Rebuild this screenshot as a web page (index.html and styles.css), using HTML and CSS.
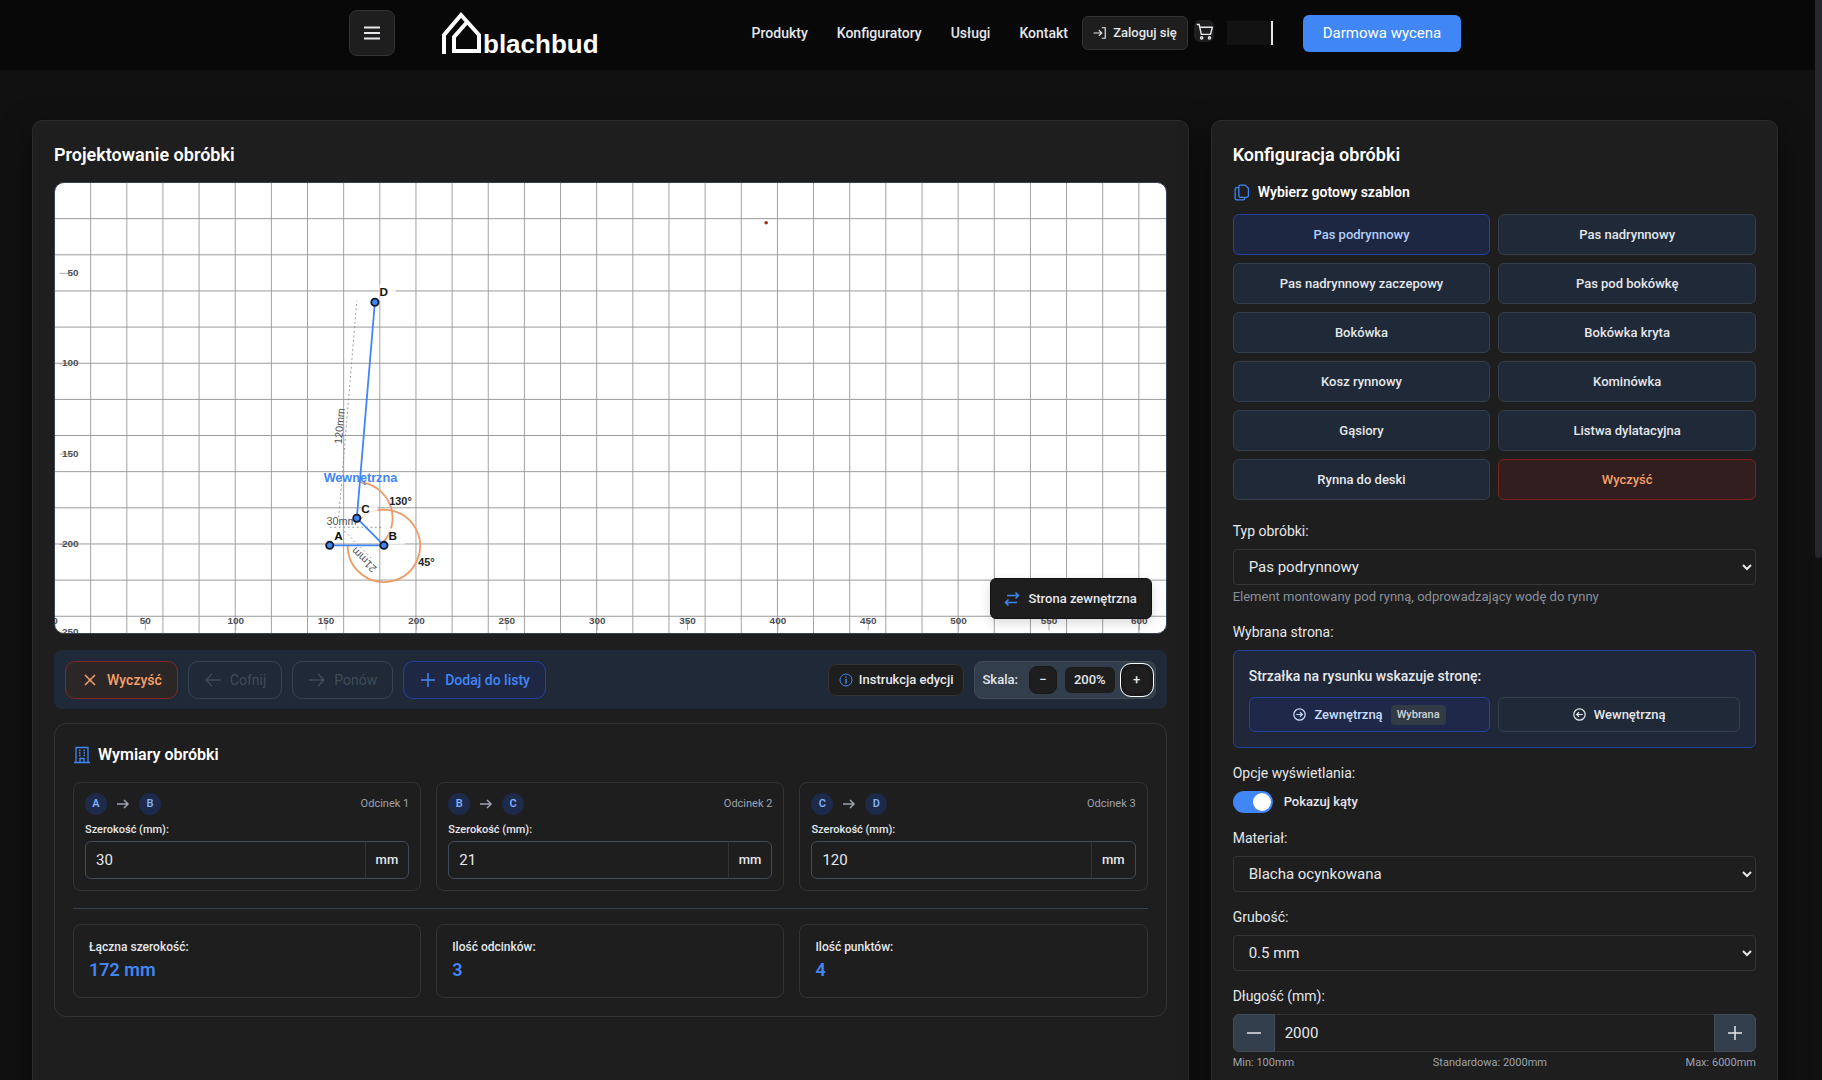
FILE: index.html
```html
<!DOCTYPE html>
<html lang="pl">
<head>
    <meta charset="UTF-8">
    <meta name="viewport" content="width=device-width, initial-scale=1.0">
    <title>Blachbud - Konfigurator obróbek</title>
    <link rel="stylesheet" href="styles.css">
</head>
<body>
    <header class="topbar">
        <div class="topbar-inner">
            <button class="menu-btn" aria-label="Menu">
                <svg width="18" height="18" viewBox="0 0 18 18" stroke="currentColor" stroke-width="2"><path d="M1 3.500h16M1 9h16M1 14.500h16"/></svg>
            </button>
            <a href="#" class="logo" aria-label="blachbud">
                <svg width="160" height="54" viewBox="0 -3 160 54">
                    <g fill="none" stroke="#fff" stroke-width="4">
                        <path d="M4 45V26L21 6l18 20v16H14V28L28 12"/>
                    </g>
                    <text x="43" y="44">blachbud</text>
                </svg>
            </a>
            <nav class="nav">
                <a href="#">Produkty</a>
                <a href="#">Konfiguratory</a>
                <a href="#">Usługi</a>
                <a href="#">Kontakt</a>
            </nav>
            <button class="login-btn">
                <svg width="14" height="14" viewBox="0 0 24 24" fill="none" stroke="currentColor" stroke-width="2"><path d="M15 3h6v18h-6M10 7l5 5-5 5M1 12h14"/></svg>
                Zaloguj się
            </button>
            <button class="cart-btn" aria-label="Koszyk">
                <svg width="17" height="17" viewBox="0 0 24 24" fill="none" stroke="currentColor" stroke-width="2"><circle cx="8" cy="21" r="1.500"/><circle cx="19" cy="21" r="1.500"/><path d="M1 2h3.500l3 14h13l2.500-10H5"/></svg>
            </button>
            <div class="search-slot"></div>
            <a href="#" class="cta">Darmowa wycena</a>
        </div>
    </header>

    <main class="layout">
        <section class="panel designer">
            <h2>Projektowanie obróbki</h2>
            <div class="canvas-wrap">
                <svg class="canvas" viewBox="0 0 1230 498" preserveAspectRatio="xMinYMin slice">
                    <defs>
                        <pattern id="grid" width="40" height="40" patternUnits="userSpaceOnUse">
                            <path d="M40 0V40H0" fill="none" stroke="#999" stroke-width="2"/>
                        </pattern>
                    </defs>
                    <rect width="1230" height="500" fill="url(#grid)"/>
                    <g id="axis" class="axis"></g>

                    <g class="dims">
                        <path d="M304 381H364M350 415L320 385M314 370L334 130"/>
                        <text x="317" y="378">30mm</text>
                        <text transform="translate(342 417) rotate(225)" y="4">21mm</text>
                        <text transform="translate(315 269) rotate(-85)" y="4">120mm</text>
                    </g>
                    <g class="arcs">
                        <path d="M324 401A40 40 0 1 0 336 373"/>
                        <path d="M337 331A40 40 0 0 1 362 399"/>
                    </g>
                    <g class="label-bg">
                        <rect x="339" y="352" width="18" height="18"/>
                        <rect x="369" y="382" width="18" height="18"/>
                        <rect x="359" y="112" width="18" height="18"/>
                    </g>
                    <path class="profile" d="M304 401H364L334 371L354 132"/>
                    <g class="points">
                        <circle cx="304" cy="401" r="4"/>
                        <circle cx="364" cy="401" r="4"/>
                        <circle cx="334" cy="371" r="4"/>
                        <circle cx="354" cy="132" r="4"/>
                    </g>
                    <g class="point-labels">
                        <text x="309" y="395">A</text>
                        <text x="369" y="395">B</text>
                        <text x="339" y="365">C</text>
                        <text x="359" y="125">D</text>
                    </g>
                    <g class="angle-labels">
                        <text x="370" y="356">130°</text>
                        <text x="402" y="424">45°</text>
                    </g>
                    <text class="side-label" x="338" y="331">Wewnętrzna</text>
                    <circle cx="787" cy="44" r="2" fill="#9a3412"/>
                </svg>
                <button class="side-badge">
                    <svg width="16" height="16" viewBox="0 0 16 16" fill="none" stroke="#4086f4" stroke-width="1.500"><path d="M3 4.500h12M11.500 1.500l3 3-3 3M13 11.500H1M4.500 8.500l-3 3 3 3"/></svg>
                    Strona zewnętrzna
                </button>
            </div>

            <div class="toolbar">
                <button class="tool tool-danger">
                    <svg width="18" height="18" viewBox="0 0 18 18"><path d="M4 4l10 10M14 4L4 14"/></svg>
                    Wyczyść
                </button>
                <button class="tool" disabled>
                    <svg width="18" height="18" viewBox="0 0 18 18"><path d="M17 9H2M8 3L2 9l6 6"/></svg>
                    Cofnij
                </button>
                <button class="tool" disabled>
                    <svg width="18" height="18" viewBox="0 0 18 18"><path d="M1 9h15M10 3l6 6-6 6"/></svg>
                    Ponów
                </button>
                <button class="tool tool-primary">
                    <svg width="18" height="18" viewBox="0 0 18 18"><path d="M9 2v14M2 9h14"/></svg>
                    Dodaj do listy
                </button>
                <button class="help-btn">
                    <svg width="14" height="14" viewBox="0 0 14 14" fill="none" stroke="#4086f4"><circle cx="7" cy="7" r="6"/><path d="M7 6v4.500M7 3.500v1.300" stroke-width="1.500"/></svg>
                    Instrukcja edycji
                </button>
                <div class="scale">
                    <span class="scale-label">Skala:</span>
                    <button class="scale-btn" aria-label="Pomniejsz">−</button>
                    <span class="scale-value">200%</span>
                    <button class="scale-btn focused" aria-label="Powiększ">+</button>
                </div>
            </div>

            <div class="dimensions">
                <h3>
                    <svg width="18" height="18" viewBox="0 0 18 18" fill="none" stroke="#4086f4" stroke-width="1.300"><path d="M3 16.500V1.500h12v15M1 16.500h16M7 16.500v-4h4v4"/><path d="M6 4.500h1.500M10.500 4.500H12M6 7h1.500M10.500 7H12M6 9.500h1.500M10.500 9.500H12" stroke-width="1.500"/></svg>
                    Wymiary obróbki
                </h3>
                <div class="cards">
                    <div class="segment">
                        <div class="segment-head">
                            <span class="dot">A</span>
                            <svg width="14" height="14" viewBox="0 0 14 14"><path d="M1 7h11M8 3l4 4-4 4"/></svg>
                            <span class="dot">B</span>
                            <span class="segment-no">Odcinek 1</span>
                        </div>
                        <label for="seg1">Szerokość (mm):</label>
                        <div class="input-group"><input id="seg1" type="text" value="30"><span>mm</span></div>
                    </div>
                    <div class="segment">
                        <div class="segment-head">
                            <span class="dot">B</span>
                            <svg width="14" height="14" viewBox="0 0 14 14"><path d="M1 7h11M8 3l4 4-4 4"/></svg>
                            <span class="dot">C</span>
                            <span class="segment-no">Odcinek 2</span>
                        </div>
                        <label for="seg2">Szerokość (mm):</label>
                        <div class="input-group"><input id="seg2" type="text" value="21"><span>mm</span></div>
                    </div>
                    <div class="segment">
                        <div class="segment-head">
                            <span class="dot">C</span>
                            <svg width="14" height="14" viewBox="0 0 14 14"><path d="M1 7h11M8 3l4 4-4 4"/></svg>
                            <span class="dot">D</span>
                            <span class="segment-no">Odcinek 3</span>
                        </div>
                        <label for="seg3">Szerokość (mm):</label>
                        <div class="input-group"><input id="seg3" type="text" value="120"><span>mm</span></div>
                    </div>
                </div>
                <hr>
                <div class="cards">
                    <div class="summary"><span>Łączna szerokość:</span><strong>172 mm</strong></div>
                    <div class="summary"><span>Ilość odcinków:</span><strong>3</strong></div>
                    <div class="summary"><span>Ilość punktów:</span><strong>4</strong></div>
                </div>
            </div>
        </section>

        <aside class="panel config">
            <h2>Konfiguracja obróbki</h2>
            <h4>
                <svg width="17" height="17" viewBox="0 0 16 16" fill="none" stroke="#4086f4" stroke-width="1.200"><path d="M5.500 2.500a1.500 1.500 0 0 1 1.500-1.500h4.500l3 3v7a1.500 1.500 0 0 1-1.500 1.500H7a1.500 1.500 0 0 1-1.500-1.500zM5.500 3.500H3.500a1.500 1.500 0 0 0-1.500 1.500V13.500a1.500 1.500 0 0 0 1.500 1.500h6a1.500 1.500 0 0 0 1.500-1.500v-1"/></svg>
                Wybierz gotowy szablon
            </h4>
            <div class="templates">
                <button class="active">Pas podrynnowy</button>
                <button>Pas nadrynnowy</button>
                <button>Pas nadrynnowy zaczepowy</button>
                <button>Pas pod bokówkę</button>
                <button>Bokówka</button>
                <button>Bokówka kryta</button>
                <button>Kosz rynnowy</button>
                <button>Kominówka</button>
                <button>Gąsiory</button>
                <button>Listwa dylatacyjna</button>
                <button>Rynna do deski</button>
                <button class="clear">Wyczyść</button>
            </div>

            <div class="field">
                <label for="type">Typ obróbki:</label>
                <select id="type"><option>Pas podrynnowy</option></select>
                <p class="hint">Element montowany pod rynną, odprowadzający wodę do rynny</p>
            </div>

            <div class="field">
                <div class="field-title">Wybrana strona:</div>
                <div class="side-box">
                    <p>Strzałka na rysunku wskazuje stronę:</p>
                    <div class="side-buttons">
                        <button class="active">
                            <svg width="13" height="13" viewBox="0 0 16 16"><circle cx="8" cy="8" r="7"/><path d="M4 8h7M8.500 5l3 3-3 3"/></svg>
                            Zewnętrzną <span class="tag">Wybrana</span>
                        </button>
                        <button>
                            <svg width="13" height="13" viewBox="0 0 16 16"><circle cx="8" cy="8" r="7"/><path d="M12 8H5M7.500 5l-3 3 3 3"/></svg>
                            Wewnętrzną
                        </button>
                    </div>
                </div>
            </div>

            <div class="field">
                <div class="field-title">Opcje wyświetlania:</div>
                <label class="switch"><input type="checkbox" checked> Pokazuj kąty</label>
            </div>

            <div class="field">
                <label for="material">Materiał:</label>
                <select id="material"><option>Blacha ocynkowana</option></select>
            </div>

            <div class="field">
                <label for="thickness">Grubość:</label>
                <select id="thickness"><option>0.5 mm</option></select>
            </div>

            <div class="field">
                <label for="length">Długość (mm):</label>
                <div class="stepper">
                    <button aria-label="Mniej"><svg width="16" height="16" viewBox="0 0 16 16"><path d="M1 8h14"/></svg></button>
                    <input id="length" type="text" value="2000">
                    <button aria-label="Więcej"><svg width="16" height="16" viewBox="0 0 16 16"><path d="M1 8h14M8 1v14"/></svg></button>
                </div>
                <div class="range-info"><span>Min: 100mm</span><span>Standardowa: 2000mm</span><span>Max: 6000mm</span></div>
            </div>
        </aside>
    </main>
    <div class="scroll-thumb"></div>

    <script>
        // Axis labels every 50 mm (1 mm = 2 units)
        const axis = document.getElementById('axis');
        let marks = '';
        for (let mm = 0; mm <= 600; mm += 50) {
            const x = mm * 2;
            marks += `<path d="M${x} 484v11"/><text x="${x}" y="488" text-anchor="middle">${mm}</text>`;
        }
        for (let mm = 50; mm <= 250; mm += 50) {
            const y = mm * 2;
            // the last label sits on the bottom edge, keep it readable
            const baseline = Math.min(y + 3, 500);
            marks += `<path d="M5 ${y}h11"/><text x="26" y="${baseline}" text-anchor="end">${mm}</text>`;
        }
        axis.innerHTML = marks;
    </script>
</body>
</html>
```

FILE: styles.css
```css
* {
    box-sizing: border-box;
}
body {
    margin: 0;
    height: 100vh;
    overflow: hidden;
    background: #111;
    color: #e5e7eb;
    font-family: Roboto, "Liberation Sans", sans-serif;
    font-size: 15px;
    line-height: 20px;
}
button, input, select {
    font: inherit;
    color: inherit;
}
button {
    cursor: pointer;
    padding: 0;
}
a {
    color: inherit;
    text-decoration: none;
}
h2, h3, h4, p {
    margin: 0;
}
svg {
    flex: none;
}

/* Header */
.topbar {
    background: #080808;
    padding: 0 28px 0 16px;
}
.topbar-inner {
    display: flex;
    align-items: center;
    height: 70px;
    padding-bottom: 4px;
    max-width: 1112px;
    margin: 0 auto;
}
.menu-btn {
    display: flex;
    align-items: center;
    justify-content: center;
    width: 46px;
    height: 46px;
    background: #1e1e1e;
    border: 1px solid #333;
    border-radius: 8px;
}
.logo {
    display: flex;
    margin-left: 45px;
}
.logo text {
    font: bold 26px "Liberation Sans", sans-serif;
    fill: #fff;
}
.nav {
    display: flex;
    gap: 29px;
    margin: 0 14px 0 auto;
    font-size: 14px;
    font-weight: 500;
}
.login-btn {
    display: flex;
    align-items: center;
    justify-content: center;
    gap: 6px;
    width: 106px;
    height: 34px;
    background: #1e1e1e;
    border: 1px solid #333;
    border-radius: 6px;
    font-size: 13px;
    font-weight: 500;
}
.cart-btn {
    display: flex;
    align-items: center;
    justify-content: center;
    width: 20px;
    height: 22px;
    margin: 0 13px 4px 6px;
    background: #1e1e1e;
    border: none;
    border-radius: 6px;
}
.search-slot {
    width: 46px;
    height: 24px;
    margin-right: 30px;
    background: #121212;
    border-right: 2px solid #e5e7eb;
}
.cta {
    display: flex;
    align-items: center;
    justify-content: center;
    width: 158px;
    height: 37px;
    background: #4086f4;
    border-radius: 6px;
    color: #fff;
}

/* Layout */
.layout {
    display: grid;
    grid-template-columns: repeat(12, 1fr);
    gap: 22px;
    padding: 50px 44px 0 32px;
}
.panel {
    min-height: 100vh;
    padding: 22px 21px;
    background: #1e1e1e;
    border: 1px solid #2b2b2d;
    border-radius: 10px;
    box-shadow: 0 10px 30px rgba(0, 0, 0, 0.5);
}
.designer {
    grid-column: span 8;
}
.config {
    grid-column: span 4;
}
.panel h2 {
    margin-bottom: 15px;
    color: #fff;
    font-size: 18px;
    font-weight: 600;
    line-height: 24px;
}

/* Drawing area */
.canvas-wrap {
    position: relative;
    height: 452px;
    border: 1px solid #374151;
    border-radius: 10px;
    background: #fff;
    overflow: hidden;
}
.canvas {
    display: block;
    width: 100%;
    height: 100%;
    font-family: "Liberation Sans", Arial, sans-serif;
}
.axis text {
    font-size: 11px;
    font-weight: bold;
    fill: #4b4f55;
}
.axis path {
    stroke: #9ca3af;
}
.dims path {
    fill: none;
    stroke: #8a8a8a;
    stroke-dasharray: 2 3;
}
.dims text {
    font-size: 12px;
    text-anchor: middle;
    fill: #555;
}
.arcs path {
    fill: none;
    stroke: #ee9a64;
    stroke-width: 2;
}
.label-bg rect {
    fill: #fff;
    opacity: 0.8;
}
.profile {
    fill: none;
    stroke: #4086f4;
    stroke-width: 2;
}
.points circle {
    fill: #4086f4;
    stroke: #111827;
    stroke-width: 2;
}
.point-labels text {
    font-size: 13px;
    font-weight: bold;
    fill: #111;
}
.angle-labels text {
    font-size: 12px;
    font-weight: bold;
    fill: #222;
}
.side-label {
    font-size: 14px;
    font-weight: bold;
    text-anchor: middle;
    fill: #4086f4;
}
.side-badge {
    position: absolute;
    right: 14px;
    bottom: 14px;
    display: flex;
    align-items: center;
    justify-content: center;
    gap: 8px;
    width: 162px;
    height: 41px;
    background: #1e1e1e;
    border: 1px solid #111;
    border-radius: 6px;
    box-shadow: 0 4px 12px rgba(0, 0, 0, 0.15);
    font-size: 13px;
    font-weight: 500;
}

/* Toolbar */
.toolbar {
    display: flex;
    align-items: center;
    gap: 10px;
    margin: 16px 0 14px;
    padding: 10px 11px;
    min-height: 59px;
    background: #1f2937;
    border-radius: 8px;
}
.tool {
    display: flex;
    align-items: center;
    gap: 8px;
    height: 38px;
    padding: 0 15px;
    background: none;
    border: 1px solid #374151;
    border-radius: 10px;
    font-size: 14px;
    font-weight: 500;
}
.tool svg, .segment-head svg, .stepper svg, .side-buttons svg {
    fill: none;
    stroke: currentColor;
    stroke-width: 1.5;
}
.tool:disabled {
    color: #414c57;
    font-weight: 400;
}
.tool-danger {
    color: #f4a06a;
    background: #2c2626;
    border-color: #7f2626;
}
.tool-primary {
    color: #4086f4;
    background: #1e2845;
    border-color: #24429a;
}
.help-btn {
    display: flex;
    align-items: center;
    gap: 6px;
    height: 32px;
    margin-left: auto;
    padding: 0 10px;
    background: #1e1e1e;
    border: 1px solid #333;
    border-radius: 8px;
    font-size: 13px;
    font-weight: 500;
}
.scale {
    display: flex;
    align-items: center;
    gap: 8px;
    height: 38px;
    padding: 0 4px 0 7px;
    background: #323e4b;
    border: 1px solid #414b56;
    border-radius: 8px;
    font-size: 13px;
    font-weight: 500;
}
.scale-label {
    margin-right: 3px;
}
.scale-btn {
    width: 28px;
    height: 28px;
    background: #1e1e1e;
    border: 1px solid #1a1a1a;
    border-radius: 8px;
}
.scale-btn.focused {
    outline: 1px solid #fff;
    outline-offset: 2px;
    box-shadow: 0 0 0 2px #1a1a1a;
}
.scale-value {
    padding: 3px 9px;
    background: #1e1e1e;
    border-radius: 6px;
}

/* Dimensions */
.dimensions {
    padding: 18px;
    border: 1px solid #333336;
    border-radius: 12px;
}
.dimensions h3 {
    display: flex;
    align-items: center;
    gap: 7px;
    margin: 1px 0 15px;
    color: #fff;
    font-size: 16px;
    font-weight: 600;
    line-height: 24px;
}
.cards {
    display: grid;
    grid-template-columns: repeat(3, 1fr);
    gap: 15px;
}
.segment {
    padding: 10px 11px 11px;
    border: 1px solid #333336;
    border-radius: 8px;
}
.segment-head {
    display: flex;
    align-items: center;
    gap: 9px;
    color: #9ca3af;
    font-size: 11px;
}
.dot {
    display: flex;
    align-items: center;
    justify-content: center;
    width: 22px;
    height: 22px;
    border-radius: 50%;
    background: #1d2a4a;
    color: #7fb0fa;
    font-size: 11px;
    font-weight: 600;
}
.segment-no {
    margin-left: auto;
}
.segment label {
    display: block;
    margin: 6px 0 2px;
    font-size: 11px;
    font-weight: 500;
    line-height: 18px;
}
.input-group {
    display: flex;
    height: 38px;
    border: 1px solid #414b5a;
    border-radius: 6px;
}
.input-group input {
    flex: 1;
    min-width: 0;
    padding: 0 10px;
    background: none;
    border: none;
}
.input-group span {
    display: flex;
    align-items: center;
    padding: 0 10px;
    border-left: 1px solid #333;
    font-size: 13px;
    font-weight: 500;
}
.dimensions hr {
    margin: 17px 0 15px;
    border: none;
    border-top: 1px solid #374151;
}
.summary {
    display: flex;
    flex-direction: column;
    padding: 12px 15px 14px;
    border: 1px solid #333336;
    border-radius: 8px;
    font-size: 12px;
    font-weight: 500;
}
.summary strong {
    color: #4086f4;
    font-size: 18px;
    font-weight: 600;
    line-height: 26px;
}

/* Configuration */
.config h4 {
    display: flex;
    align-items: center;
    gap: 8px;
    margin: 0 0 12px;
    color: #fff;
    font-size: 14px;
    font-weight: 600;
}
.templates {
    display: grid;
    grid-template-columns: 1fr 1fr;
    gap: 8px;
    margin-bottom: 21px;
}
.templates button {
    height: 41px;
    background: #1f2937;
    border: 1px solid #333f4c;
    border-radius: 6px;
    font-size: 13px;
    font-weight: 500;
}
.templates .active {
    background: #1e2742;
    border-color: #24429a;
    color: #b4cffa;
}
.templates .clear {
    background: #331e1f;
    border-color: #7f2020;
    color: #f4a06a;
}
.field {
    margin-bottom: 15px;
}
.field > label, .field-title {
    display: block;
    margin-bottom: 8px;
    font-size: 14px;
}
.field > label.switch {
    display: flex;
    align-items: center;
    gap: 11px;
    margin: 0;
    font-size: 13px;
    font-weight: 500;
}
.field select {
    width: 100%;
    height: 36px;
    padding: 0 0 0 11px;
    background: #1e1e1e;
    border: 1px solid #343437;
    border-radius: 4px;
}
.hint {
    margin-top: 2px;
    color: #8b909a;
    font-size: 13px;
}
.side-box {
    padding: 15px;
    background: #1f2738;
    border: 1px solid #24429a;
    border-radius: 6px;
}
.side-box p {
    margin-bottom: 11px;
    font-size: 14px;
    font-weight: 500;
}
.side-buttons {
    display: grid;
    grid-template-columns: 1fr 1fr;
    gap: 8px;
}
.side-buttons button {
    display: flex;
    align-items: center;
    justify-content: center;
    gap: 8px;
    height: 35px;
    background: #1f2937;
    border: 1px solid #333f4c;
    border-radius: 6px;
    font-size: 13px;
    font-weight: 500;
}
.side-buttons .active {
    background: #1e2848;
    border-color: #24429a;
    color: #c9dcfb;
}
.tag {
    padding: 0 6px;
    background: #323b45;
    border-radius: 4px;
    color: #d1d5db;
    font-size: 11px;
}
.switch input {
    appearance: none;
    width: 40px;
    height: 22px;
    margin: 0;
    padding: 2px;
    background: #4086f4;
    border-radius: 11px;
}
.switch input::before {
    content: "";
    display: block;
    width: 18px;
    height: 18px;
    border-radius: 50%;
    background: #fff;
}
.switch input:checked::before {
    margin-left: auto;
}
.stepper {
    display: flex;
    height: 38px;
}
.stepper button {
    display: flex;
    align-items: center;
    justify-content: center;
    width: 42px;
    background: #323e4b;
    border: 1px solid #414b56;
    border-radius: 6px 0 0 6px;
}
.stepper button:last-child {
    border-radius: 0 6px 6px 0;
}
.stepper input {
    flex: 1;
    min-width: 0;
    padding: 0 10px;
    background: none;
    border: 1px solid #343437;
    border-width: 1px 0;
}
.range-info {
    display: flex;
    justify-content: space-between;
    color: #9ca3af;
    font-size: 11px;
    line-height: 22px;
}

/* Page scroll indicator */
.scroll-thumb {
    position: fixed;
    top: 0;
    right: 0;
    width: 7px;
    height: 558px;
    background: #28282c;
    border-radius: 0 0 4px 4px;
}

@media (max-width: 1000px) {
    .designer, .config {
        grid-column: span 12;
    }
}
```
